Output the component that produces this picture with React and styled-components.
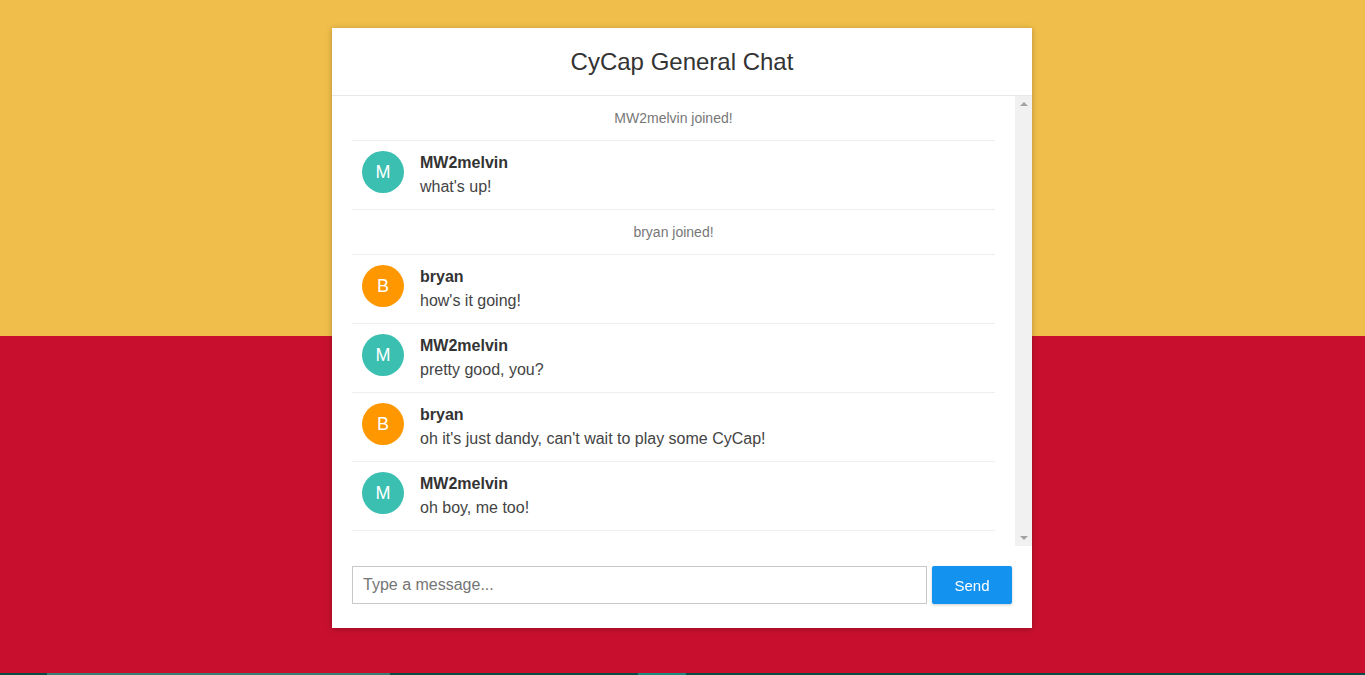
import React from "react";
import styled, { createGlobalStyle } from "styled-components";

const GlobalStyle = createGlobalStyle`
  html, body {
    margin: 0;
    padding: 0;
    overflow: hidden;
  }
  body {
    font-family: "Liberation Sans", Arial, sans-serif;
    color: #333;
  }
`;

const Page = styled.div`
  height: 673px;
  background: linear-gradient(to bottom, #f0be4a 0, #f0be4a 336px, #c8102e 336px, #c8102e 100%);
  display: flex;
  justify-content: center;
  align-items: flex-start;
  padding: 28px 1px 0 0;
  box-sizing: border-box;
`;

const Card = styled.div`
  width: 700px;
  height: 600px;
  background: #fff;
  box-shadow: 0 1px 6px rgba(0, 0, 0, 0.25);
  display: flex;
  flex-direction: column;
`;

const Header = styled.div`
  height: 67px;
  flex-shrink: 0;
  border-bottom: 1px solid #e8e8e8;
  display: flex;
  align-items: center;
  justify-content: center;
`;

const Title = styled.h1`
  margin: 0;
  font-size: 24px;
  font-weight: normal;
  color: #333;
`;

const Body = styled.div`
  height: 450px;
  flex-shrink: 0;
  display: flex;
`;

const List = styled.ul`
  flex: 1;
  margin: 0;
  padding: 0 20px;
  list-style: none;
  overflow: hidden;
`;

const Notice = styled.li`
  height: 44px;
  border-bottom: 1px solid #eee;
  display: flex;
  align-items: center;
  justify-content: center;
  font-size: 14px;
  color: #777;
`;

const Row = styled.li`
  height: 58px;
  border-bottom: 1px solid #eee;
  display: flex;
  align-items: flex-start;
  padding: 10px 10px 0;
  gap: 16px;
`;

const Avatar = styled.div`
  width: 42px;
  height: 42px;
  border-radius: 50%;
  background: ${props => props.color};
  color: #fff;
  font-size: 18px;
  display: flex;
  align-items: center;
  justify-content: center;
  flex-shrink: 0;
`;

const Bubble = styled.div`
  display: flex;
  flex-direction: column;
  padding-top: 1px;
`;

const Name = styled.span`
  font-size: 16px;
  font-weight: bold;
  line-height: 22px;
  color: #333;
`;

const Text = styled.span`
  font-size: 16px;
  line-height: 26px;
  color: #444;
`;

const Rail = styled.div`
  width: 17px;
  background: #f1f1f1;
  display: flex;
  flex-direction: column;
  justify-content: space-between;
  align-items: center;
  padding: 6px 0;
  box-sizing: border-box;
`;

const Arrow = styled.span`
  width: 0;
  height: 0;
  border-left: 4px solid transparent;
  border-right: 4px solid transparent;
  ${props =>
    props.down
      ? "border-top: 4px solid #a3a3a3;"
      : "border-bottom: 4px solid #a3a3a3;"}
`;

const Composer = styled.form`
  flex: 1;
  display: flex;
  align-items: flex-start;
  padding: 20px 20px 0;
  gap: 5px;
`;

const Input = styled.input`
  flex: 1;
  height: 38px;
  box-sizing: border-box;
  border: 1px solid #c8c8c8;
  padding: 0 10px;
  font-family: "Liberation Sans", Arial, sans-serif;
  font-size: 16px;
  color: #333;
  outline: none;
  &::placeholder {
    color: #757575;
  }
`;

const SendButton = styled.button`
  width: 80px;
  height: 38px;
  border: none;
  border-radius: 2px;
  background: #1492f0;
  color: #fff;
  font-family: "Liberation Sans", Arial, sans-serif;
  font-size: 15px;
  box-shadow: 0 1px 3px rgba(0, 0, 0, 0.2);
  cursor: pointer;
`;

const Taskbar = styled.div`
  height: 2px;
  background: #0b4a45;
  display: flex;
`;

const TaskItem = styled.div`
  width: ${props => props.w}px;
  margin-left: ${props => props.offset}px;
  background: ${props => props.color};
`;

const COLORS = { M: "#3bbfb0", B: "#ff9800" };

const feed = [
  { type: "notice", text: "MW2melvin joined!" },
  { type: "msg", user: "MW2melvin", text: "what's up!" },
  { type: "notice", text: "bryan joined!" },
  { type: "msg", user: "bryan", text: "how's it going!" },
  { type: "msg", user: "MW2melvin", text: "pretty good, you?" },
  { type: "msg", user: "bryan", text: "oh it's just dandy, can't wait to play some CyCap!" },
  { type: "msg", user: "MW2melvin", text: "oh boy, me too!" }
];

const App = () => {
  const initial = u => u.charAt(0).toUpperCase();
  return (
    <>
      <GlobalStyle />
      <Page>
        <Card>
          <Header>
            <Title>CyCap General Chat</Title>
          </Header>
          <Body>
            <List>
              {feed.map((item, i) =>
                item.type === "notice" ? (
                  <Notice key={i}>{item.text}</Notice>
                ) : (
                  <Row key={i}>
                    <Avatar color={COLORS[initial(item.user)]}>{initial(item.user)}</Avatar>
                    <Bubble>
                      <Name>{item.user}</Name>
                      <Text>{item.text}</Text>
                    </Bubble>
                  </Row>
                )
              )}
            </List>
            <Rail>
              <Arrow />
              <Arrow down />
            </Rail>
          </Body>
          <Composer onSubmit={e => e.preventDefault()}>
            <Input placeholder="Type a message..." autoFocus />
            <SendButton type="submit">Send</SendButton>
          </Composer>
        </Card>
      </Page>
      <Taskbar>
        <TaskItem offset={47} w={343} color="#3b7a75" />
        <TaskItem offset={248} w={48} color="#1a8a80" />
      </Taskbar>
    </>
  );
};

export default App;
